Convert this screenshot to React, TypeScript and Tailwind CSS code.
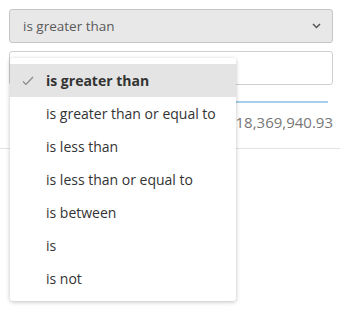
const options = [
  "is greater than",
  "is greater than or equal to",
  "is less than",
  "is less than or equal to",
  "is between",
  "is",
  "is not",
];

export default function App() {
  return (
    <div
      className="relative h-[312px] w-[340px] overflow-hidden bg-white"
      style={{ fontFamily: '"Open Sans", "Liberation Sans", sans-serif' }}
    >
      <div className="pl-[9px] pr-[7px] pt-[9px]">
        <div className="flex h-[34px] items-center justify-between rounded-[3px] border border-[#c6c6c6] bg-[#e8e8e8] pl-[13px] pr-[11px] text-[13.5px] text-[#5a5a5a]">
          <span>is greater than</span>
          <svg width="9" height="6" viewBox="0 0 9 6" fill="none">
            <path d="M1 1l3.5 3.5L8 1" stroke="#555" strokeWidth="1.5" />
          </svg>
        </div>
        <div className="mt-[8px] h-[34px] rounded-[3px] border border-[#cfcfcf] bg-white" />
      </div>

      <div className="mt-[16px] border-b border-[#e2e2e2] pb-[15px]">
        <div className="ml-[236px] mr-[12px] h-[2px] bg-[#a8d0ea]" />
        <div className="pr-[7px] pt-[8px] text-right text-[15px] leading-[22px] text-[#777]">18,369,940.93</div>
      </div>

      <div className="absolute left-[10px] top-[58px] w-[226px] rounded-[3px] bg-white py-[6px] shadow-[0_1px_4px_rgba(0,0,0,0.25)]">
        {options.map((o, i) => (
          <div
            key={o}
            className={
              i === 0
                ? "flex h-[33px] items-center bg-[#e4e4e4] text-[14px] font-bold text-[#333]"
                : "flex h-[33px] items-center text-[14px] text-[#333]"
            }
          >
            <span className="flex w-[36px] justify-center">
              {i === 0 && (
                <svg width="12" height="10" viewBox="0 0 12 10" fill="none">
                  <path d="M1 5.5l3 3L11 1" stroke="#888" strokeWidth="1.2" />
                </svg>
              )}
            </span>
            <span>{o}</span>
          </div>
        ))}
      </div>
    </div>
  );
}
